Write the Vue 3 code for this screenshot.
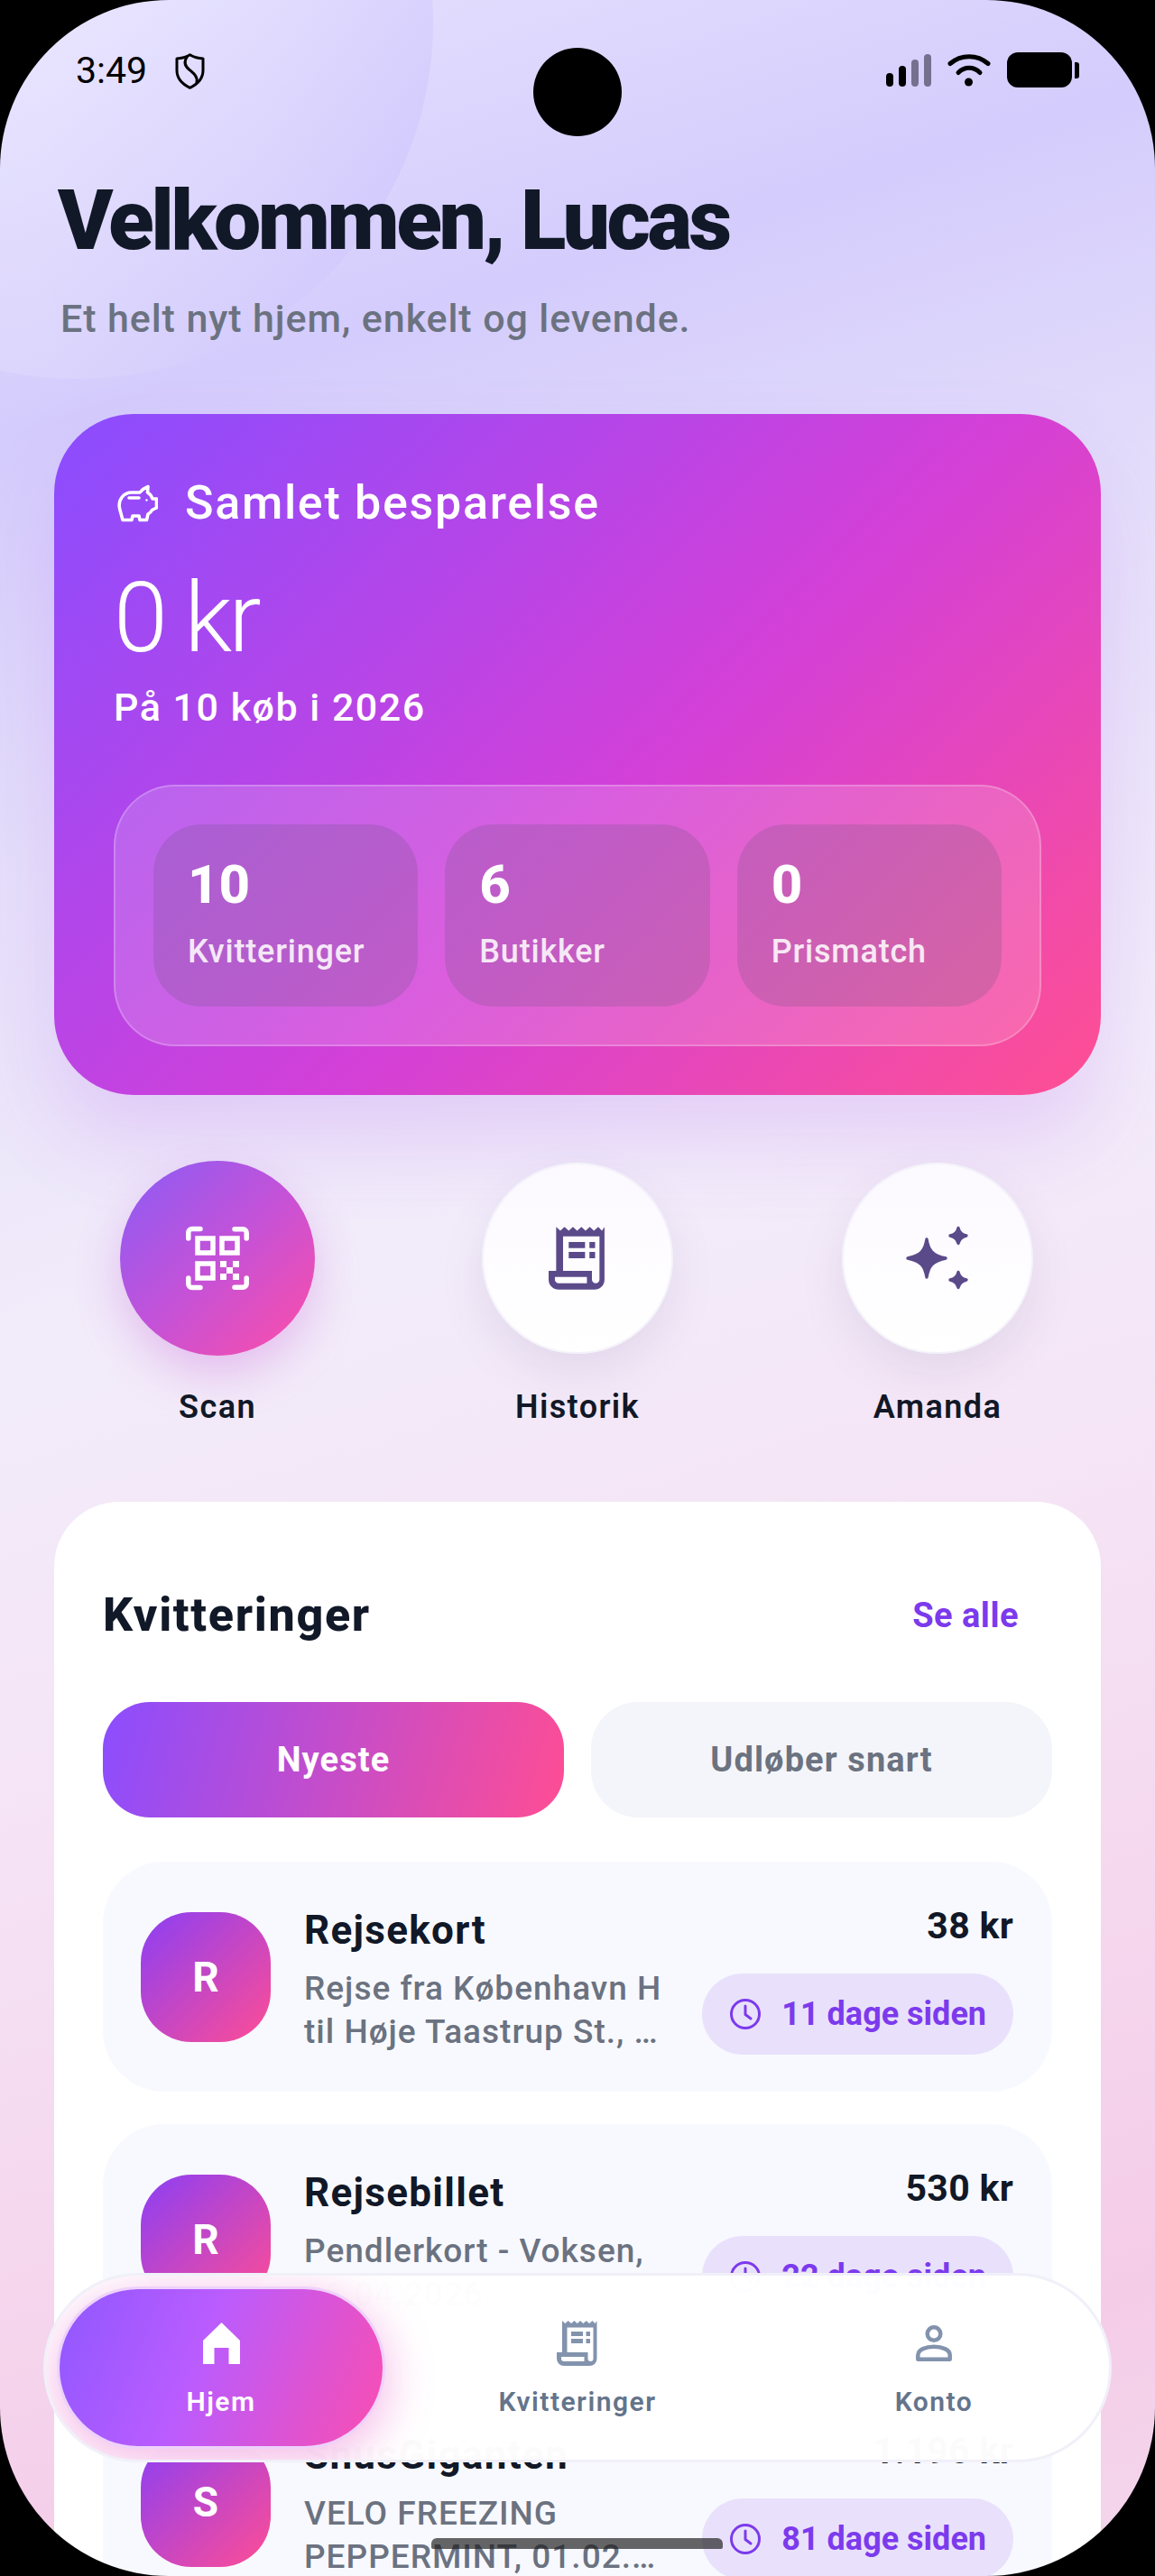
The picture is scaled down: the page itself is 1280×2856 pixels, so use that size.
<template>
  <div class="screen">
    <div class="blob"></div>

    <div class="status">
      <div class="status-left">
        <span class="time">3:49</span>
        <svg class="shield" viewBox="0 0 33 40" fill="none" stroke="#000" stroke-width="3" stroke-linejoin="round" stroke-linecap="round">
          <path d="M16.5 1.8 C21 4.5 26 5.8 31 6 V19 C31 28.5 24.5 34.5 16.5 38.3 C8.5 34.5 2 28.5 2 19 V6 C7 5.8 12 4.5 16.5 1.8 Z" />
          <path d="M13.5 3.5 C9.5 9.5 10.5 14 15.5 18 C20.5 22 25.5 26 24 32.5" />
        </svg>
      </div>
      <div class="status-right">
        <div class="signal">
          <i class="bar b1"></i>
          <i class="bar b2"></i>
          <i class="bar b3 off"></i>
          <i class="bar b4 off"></i>
        </div>
        <svg class="wifi" viewBox="0 0 48 36" fill="none" stroke="#000" stroke-width="5" stroke-linecap="round">
          <path d="M3 10.5 C15 0 33 0 45 10.5" />
          <path d="M12 20.5 C19 13.5 29 13.5 36 20.5" />
          <circle cx="23.5" cy="31" r="4.5" fill="#000" stroke="none" />
        </svg>
        <div class="battery"></div>
        <div class="nub"></div>
      </div>
    </div>

    <main class="content">
      <h1 class="title">Velkommen, Lucas</h1>
      <p class="subtitle">Et helt nyt hjem, enkelt og levende.</p>

      <section class="hero">
        <div class="hero-head">
          <svg class="pig" viewBox="0 0 45 42" fill="none" stroke="#fff" stroke-width="3.6" stroke-linejoin="round" stroke-linecap="round">
            <path d="M6 39.5 L2.6 27 C0.5 17 7 9 16 9 H25 C27 6.5 30 4 34 2.5 L33.5 9 C36 10.5 38 13 39 16 H43.5 V26 L38.5 28.5 C37.5 30.5 36 32 34 33 L32.5 39.5 H25 L24 35 H17 L16 39.5 Z" />
            <path d="M13 15 H24" />
            <circle cx="32.5" cy="17.5" r="1.2" fill="#fff" stroke="none" />
          </svg>
          <span>Samlet besparelse</span>
        </div>
        <div class="hero-amount">0 kr</div>
        <div class="hero-sub">På 10 køb i 2026</div>
        <div class="stats">
          <div v-for="s in stats" :key="s.label" class="stat">
            <div class="stat-num">{{ s.num }}</div>
            <div class="stat-label">{{ s.label }}</div>
          </div>
        </div>
      </section>

      <div class="actions">
        <div class="action">
          <div class="circle primary">
            <svg class="action-icon" viewBox="0 0 70 70" fill="none" stroke="#fff" stroke-width="5.5" stroke-linecap="round" stroke-linejoin="round">
              <path d="M2.8 13 V6.5 a4 4 0 0 1 4-4 H16" />
              <path d="M54 2.8 H63.2 a4 4 0 0 1 4 4 V13" />
              <path d="M2.8 57 V63.5 a4 4 0 0 0 4 4 H16" />
              <path d="M54 67.2 H63.2 a4 4 0 0 0 4-4 V57" />
              <rect x="13" y="13" width="17" height="16" stroke-linecap="butt" stroke-linejoin="miter" />
              <rect x="40" y="13" width="17" height="16" stroke-linecap="butt" stroke-linejoin="miter" />
              <rect x="13" y="41" width="17" height="16" stroke-linecap="butt" stroke-linejoin="miter" />
              <g fill="#fff" stroke="none">
                <rect x="38" y="38" width="7" height="7" />
                <rect x="52" y="38" width="7" height="7" />
                <rect x="45" y="45" width="7" height="7" />
                <rect x="38" y="52" width="7" height="7" />
                <rect x="52" y="52" width="7" height="7" />
              </g>
            </svg>
          </div>
          <span class="action-label">Scan</span>
        </div>
        <div class="action">
          <div class="circle">
            <svg class="receipt-lg" viewBox="0 0 46 50">
              <path fill="#5b4a8a" fill-rule="evenodd" :d="receiptPath" />
            </svg>
          </div>
          <span class="action-label">Historik</span>
        </div>
        <div class="action">
          <div class="circle">
            <svg class="action-icon" viewBox="0 0 70 72" fill="#5b4a8a" stroke="#5b4a8a" stroke-width="3.4" stroke-linejoin="round">
              <path d="M23 15 C25 27 29 33 44 36 C29 39 25 45 23 57 C21 45 17 39 2 36 C17 33 21 27 23 15 Z" />
              <path d="M58 2.500 C59 7 62.500 10 67 11 C62.500 12 59 15 58 19.500 C57 15 53.500 12 49 11 C53.500 10 57 7 58 2.500 Z" />
              <path d="M58 51.500 C59 56 62.500 59 67 60 C62.500 61 59 64 58 68.500 C57 64 53.500 61 49 60 C53.500 59 57 56 58 51.500 Z" />
            </svg>
          </div>
          <span class="action-label">Amanda</span>
        </div>
      </div>

      <section class="card">
        <div class="card-head">
          <h2>Kvitteringer</h2>
          <span class="see-all">Se alle</span>
        </div>
        <div class="tabs">
          <div class="tab active">Nyeste</div>
          <div class="tab">Udløber snart</div>
        </div>
        <div class="list">
          <article v-for="r in receipts" :key="r.name" class="item">
            <div class="avatar">{{ r.name[0] }}</div>
            <div class="info">
              <div class="name">{{ r.name }}</div>
              <div class="desc">{{ r.desc }}</div>
            </div>
            <div class="meta">
              <div class="price">{{ r.price }}</div>
              <div class="age">
                <svg class="clock" viewBox="0 0 36 36" fill="none" stroke="#7c3aed" stroke-width="3" stroke-linecap="round" stroke-linejoin="round">
                  <circle cx="18" cy="18" r="15.500" />
                  <path d="M18 9 V18.500 L24 23" />
                </svg>
                <span>{{ r.age }}</span>
              </div>
            </div>
          </article>
        </div>
      </section>
    </main>

    <nav class="nav">
      <div class="nav-tab current">
        <svg class="nav-home" viewBox="0 0 41 46">
          <path fill="#fff" d="M20.500 0 L41 20 V46 H28.500 V28 H12.500 V46 H0 V20 Z" />
        </svg>
        <span>Hjem</span>
      </div>
      <div class="nav-tab">
        <svg class="nav-receipt" viewBox="0 0 46 50">
          <path fill="#8393ad" fill-rule="evenodd" :d="receiptPath" />
        </svg>
        <span>Kvitteringer</span>
      </div>
      <div class="nav-tab">
        <svg class="nav-user" viewBox="0 0 40 40" fill="none" stroke="#8393ad" stroke-width="4.500" stroke-linejoin="round">
          <circle cx="20" cy="9.500" r="7.300" />
          <path d="M2.300 37.700 V33 C2.300 27 11 23.800 20 23.800 C29 23.800 37.700 27 37.700 33 V37.700 Z" />
        </svg>
        <span>Konto</span>
      </div>
    </nav>

    <div class="camera"></div>
    <div class="home-bar"></div>
    <div class="bezel"></div>
  </div>
</template>

<script setup>
const receiptPath =
  'M6 0 l3.300 3 3.400-3 3.300 3 3.400-3 3.300 3 3.400-3 3.300 3 3.400-3 3.300 3 3.400-3 3 3 2-3 V42 a8 8 0 0 1-8 8 H8 a8 8 0 0 1-8-8 V35 H6 Z ' +
  'M11.500 7.500 V35 H34.500 V42 a3 3 0 0 0 6 0 V7.500 Z ' +
  'M5 40 V42 a3 3 0 0 0 3 3 H30.500 V40 Z ' +
  'M16 12 H29 V17 H16 Z M32.500 12 H37 V17 H32.500 Z M16 20 H29 V25 H16 Z M32.500 20 H37 V25 H32.500 Z'

const stats = [
  { num: '10', label: 'Kvitteringer' },
  { num: '6', label: 'Butikker' },
  { num: '0', label: 'Prismatch' },
]

const receipts = [
  { name: 'Rejsekort', desc: 'Rejse fra København H til Høje Taastrup St., …', price: '38 kr', age: '11 dage siden' },
  { name: 'Rejsebillet', desc: 'Pendlerkort - Voksen, 16.04.2026', price: '530 kr', age: '22 dage siden' },
  { name: 'SnusGiganten', desc: 'VELO FREEZING PEPPERMINT, 01.02.…', price: '1.196 kr', age: '81 dage siden' },
]
</script>

<style>
html,
body {
  margin: 0;
  background: #000;
}
</style>

<style scoped>
.screen {
  position: relative;
  width: 1280px;
  height: 2856px;
  overflow: hidden;
  font-family: Roboto, "Liberation Sans", sans-serif;
  background: linear-gradient(163deg, #e7e3ff 0%, #d4ccfc 15%, #e6e0fa 30%, #f2ecfa 47%, #f5e4f5 62%, #f5cce8 90%, #f3d8ec 100%);
}

.blob {
  position: absolute;
  left: -310px;
  top: -370px;
  width: 790px;
  height: 790px;
  border-radius: 50%;
  background: linear-gradient(90deg, rgba(255, 255, 255, 0.13) 45%, rgba(200, 190, 250, 0.04) 75%, rgba(160, 140, 250, 0.13) 100%);
}

.bezel {
  position: absolute;
  inset: 0;
  border-radius: 187px;
  box-shadow: 0 0 0 300px #000;
  pointer-events: none;
  z-index: 5;
}

.camera {
  position: absolute;
  left: 591px;
  top: 53px;
  width: 98px;
  height: 98px;
  border-radius: 50%;
  background: #000;
  z-index: 4;
}

.home-bar {
  position: absolute;
  left: 478px;
  top: 2814px;
  width: 323px;
  height: 12px;
  border-radius: 6px 6px 2px 2px;
  background: rgba(30, 30, 30, 0.68);
  z-index: 4;
}

.status {
  position: relative;
  display: flex;
  justify-content: space-between;
  align-items: flex-start;
  height: 191px;
  padding: 54px 84px 0 84px;
  box-sizing: border-box;
}

.status-left {
  display: flex;
  align-items: center;
  gap: 31px;
}

.time {
  font-size: 41px;
  line-height: 46px;
  color: #000;
  margin-top: 1px;
}

.shield {
  width: 33px;
  height: 40px;
  margin-top: 3px;
}

.status-right {
  display: flex;
  align-items: flex-start;
  margin-top: 4px;
}

.signal {
  display: flex;
  align-items: flex-end;
  gap: 6px;
  height: 36px;
  margin-top: 2px;
}

.bar {
  width: 8px;
  border-radius: 4px;
  background: #000;
}

.b1 { height: 15px; }
.b2 { height: 23px; }
.b3 { height: 30px; }
.b4 { height: 36px; }

.off {
  background: #76708f;
}

.wifi {
  width: 48px;
  height: 36px;
  margin: 2px 0 0 18px;
}

.battery {
  width: 72px;
  height: 39px;
  margin-left: 18px;
  border-radius: 12px;
  background: #000;
}

.nub {
  width: 5px;
  height: 18px;
  margin: 11px 0 0 3px;
  border-radius: 0 3px 3px 0;
  background: #000;
}

.content {
  position: relative;
  padding: 0 60px;
}

.title {
  margin: 0 0 0 4px;
  font-size: 93px;
  line-height: 108px;
  font-weight: 900;
  letter-spacing: -3.4px;
  color: #111827;
}

.subtitle {
  margin: 28px 0 0 7px;
  font-size: 43px;
  line-height: 52px;
  font-weight: 500;
  letter-spacing: 0.9px;
  color: #6b7280;
}

.hero {
  box-sizing: border-box;
  height: 755px;
  margin-top: 80px;
  padding: 69px 66px 0;
  border-radius: 88px;
  color: #fff;
  background: linear-gradient(135deg, #8a4dff 0%, #d340d8 55%, #ff4f93 100%);
  box-shadow: 0 50px 90px rgba(170, 80, 240, 0.18);
}

.hero-head {
  display: flex;
  align-items: center;
  gap: 30px;
  font-size: 52px;
  line-height: 60px;
  font-weight: 500;
  letter-spacing: 1.7px;
}

.pig {
  width: 45px;
  height: 42px;
  margin-left: 4px;
}

.hero-amount {
  margin-top: 34px;
  font-size: 108px;
  line-height: 126px;
  font-weight: 300;
  letter-spacing: -4px;
}

.hero-sub {
  margin-top: 10px;
  font-size: 43px;
  line-height: 52px;
  font-weight: 500;
  letter-spacing: 1.5px;
}

.stats {
  display: flex;
  gap: 30px;
  margin-top: 60px;
  padding: 42px;
  border: 2.500px solid rgba(255, 255, 255, 0.22);
  border-radius: 68px;
  background: rgba(255, 255, 255, 0.16);
}

.stat {
  flex: 1;
  box-sizing: border-box;
  height: 202px;
  padding: 32px 38px;
  border-radius: 54px;
  background: rgba(90, 80, 110, 0.2);
}

.stat-num {
  font-size: 60px;
  line-height: 70px;
  font-weight: 800;
}

.stat-label {
  margin-top: 17px;
  font-size: 36px;
  line-height: 44px;
  font-weight: 500;
  letter-spacing: 0.8px;
  opacity: 0.86;
}

.actions {
  display: flex;
  justify-content: space-between;
  margin-top: 73px;
  padding: 0 73px;
}

.action {
  display: flex;
  flex-direction: column;
  align-items: center;
  width: 216px;
}

.circle {
  display: flex;
  align-items: center;
  justify-content: center;
  box-sizing: border-box;
  width: 212px;
  height: 212px;
  margin: 2px 0;
  border-radius: 50%;
  background: linear-gradient(180deg, #fcf9ff, #fff);
  border: 2px solid rgba(230, 230, 242, 0.4);
  box-shadow: 0 20px 50px rgba(90, 70, 130, 0.1);
}

.primary {
  width: 216px;
  height: 216px;
  margin: 0;
  border: 0;
  background: linear-gradient(135deg, #8a5cf6, #c452d8 50%, #ff4da6);
  box-shadow: 0 20px 50px rgba(190, 70, 210, 0.28);
}

.action-icon {
  width: 70px;
  height: 72px;
}

.receipt-lg {
  width: 64px;
  height: 70px;
}

.action-label {
  margin-top: 36px;
  font-size: 36px;
  line-height: 42px;
  font-weight: 600;
  letter-spacing: 1.4px;
  color: #111827;
  white-space: nowrap;
}

.card {
  box-sizing: border-box;
  height: 1300px;
  margin-top: 84px;
  padding: 94px 54px 0;
  border-radius: 72px;
  background: #fff;
}

.card-head {
  display: flex;
  align-items: center;
  justify-content: space-between;
  padding-right: 37px;
}

.card-head h2 {
  margin: 0;
  font-size: 52px;
  line-height: 64px;
  font-weight: 800;
  letter-spacing: 1.7px;
  color: #111827;
}

.see-all {
  font-size: 38px;
  font-weight: 700;
  letter-spacing: 0.5px;
  color: #7c3aed;
}

.tabs {
  display: flex;
  gap: 30px;
  margin-top: 64px;
}

.tab {
  flex: 1;
  height: 128px;
  line-height: 128px;
  text-align: center;
  border-radius: 52px;
  font-size: 38px;
  font-weight: 700;
  letter-spacing: 1.1px;
  color: #6b7280;
  background: #f4f5fa;
}

.active {
  color: #fff;
  background: linear-gradient(105deg, #8b4dff, #ff4d94);
}

.list {
  display: flex;
  flex-direction: column;
  gap: 36px;
  margin-top: 49px;
}

.item {
  display: flex;
  box-sizing: border-box;
  height: 255px;
  padding: 0 43px 0 42px;
  border-radius: 68px;
  background: #f8f9fe;
}

.avatar {
  align-self: center;
  flex: none;
  width: 144px;
  height: 144px;
  line-height: 144px;
  text-align: center;
  border-radius: 56px;
  font-size: 46px;
  font-weight: 700;
  color: #fff;
  background: linear-gradient(135deg, #8b3ff5, #ff4d94);
}

.info {
  width: 412px;
  margin-left: 37px;
  padding-top: 50px;
}

.name {
  font-size: 44px;
  line-height: 52px;
  font-weight: 700;
  letter-spacing: 1.3px;
  color: #111827;
}

.desc {
  margin-top: 15px;
  font-size: 37px;
  line-height: 48px;
  font-weight: 500;
  letter-spacing: 1px;
  color: #6b7280;
}

.meta {
  display: flex;
  flex-direction: column;
  align-items: flex-end;
  flex: 1;
  padding-top: 47px;
}

.price {
  font-size: 41px;
  line-height: 48px;
  font-weight: 700;
  letter-spacing: 0.3px;
  color: #111827;
}

.age {
  display: flex;
  align-items: center;
  gap: 22px;
  box-sizing: border-box;
  height: 90px;
  margin-top: 29px;
  padding: 0 30px;
  border-radius: 45px;
  font-size: 36px;
  font-weight: 700;
  color: #7c3aed;
  white-space: nowrap;
  background: #e9e1fb;
}

.clock {
  width: 36px;
  height: 36px;
}

.nav {
  position: absolute;
  left: 48px;
  top: 2520px;
  z-index: 3;
  display: flex;
  justify-content: space-between;
  box-sizing: border-box;
  width: 1184px;
  height: 210px;
  padding: 15px;
  overflow: hidden;
  border: 3px solid rgba(240, 238, 248, 0.9);
  border-radius: 105px;
  background: rgba(255, 255, 255, 0.985);
}

.nav-tab {
  display: flex;
  flex-direction: column;
  align-items: center;
  justify-content: flex-end;
  flex: none;
  width: 358px;
  height: 174px;
  padding-bottom: 31px;
  box-sizing: border-box;
  border-radius: 87px;
  font-size: 30px;
  line-height: 36px;
  font-weight: 600;
  letter-spacing: 1.5px;
  color: #64748b;
}

.current {
  color: #fff;
  background: linear-gradient(112deg, #8f58ff 0%, #b95cff 42%, #fa4db0 100%);
  box-shadow: 0 0 0 3px #eed2fb, 0 12px 50px 6px rgba(226, 70, 190, 0.36);
}

.nav-home {
  width: 41px;
  height: 46px;
  margin-bottom: 24px;
}

.nav-receipt {
  width: 46px;
  height: 50px;
  margin-bottom: 22px;
}

.nav-user {
  width: 40px;
  height: 40px;
  margin-bottom: 27px;
}
</style>
